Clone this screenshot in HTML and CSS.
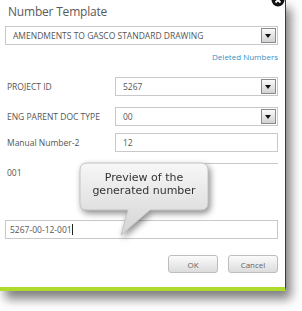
FILE: index.html
```html
<!DOCTYPE html>
<html lang="en">
<head>
  <meta charset="UTF-8" />
  <title>Number Template</title>
  <link rel="stylesheet" href="styles.css">
</head>
<body>

  <div class="stage">
    <div class="dialog">
      <span class="close">
        <svg width="14" height="14" viewBox="0 0 14 14">
          <circle cx="7" cy="7" r="6.5" fill="#111"/>
          <path d="M4.5 4.5 L9.5 9.5 M9.5 4.5 L4.5 9.5" stroke="#fff" stroke-width="1.8"/>
        </svg>
      </span>
      <h1 class="title">Number Template</h1>

      <div class="field select wide">
        <span class="value">AMENDMENTS TO GASCO STANDARD DRAWING</span>
        <span class="drop"></span>
      </div>

      <div class="links"><a class="link">Deleted Numbers</a></div>

      <div class="row first">
        <label>PROJECT ID</label>
        <div class="field select">
          <span class="value">5267</span>
          <span class="drop"></span>
        </div>
      </div>

      <div class="row r2">
        <label>ENG PARENT DOC TYPE</label>
        <div class="field select">
          <span class="value">00</span>
          <span class="drop"></span>
        </div>
      </div>

      <div class="row r3">
        <label>Manual Number-2</label>
        <div class="field input"><span class="value">12</span></div>
      </div>

      <div class="row r4">
        <label>001</label>
        <div class="field line"></div>
      </div>

      <div class="field input preview"><span class="value">5267-00-12-001</span><span class="caret"></span></div>

      <div class="actions">
        <button>OK</button>
        <button>Cancel</button>
      </div>

      <div class="callout">
        <svg width="140" height="82" viewBox="0 0 140 82">
          <defs>
            <linearGradient id="cg" x1="0" y1="0" x2="0" y2="1">
              <stop offset="0" stop-color="#f7f7f7"/>
              <stop offset="1" stop-color="#d4d4d4"/>
            </linearGradient>
          </defs>
          <path d="M8 1 H122 Q129 1 129 8 V41 Q129 48 122 48 H71 L42 73 L49 48 H8 Q1 48 1 41 V8 Q1 1 8 1 Z"
                fill="url(#cg)" stroke="#c4c4c4" stroke-width="1"/>
        </svg>
        <p>Preview of the<br>generated number</p>
      </div>
    </div>
  </div>

</body>
</html>
```

FILE: styles.css
```css
body {
  margin: 0;
  background: #ffffff;
  font-family: 'Open Sans', sans-serif;
}

.stage {
  position: relative;
  width: 302px;
  height: 311px;
  overflow: hidden;
  background: #ffffff;
}

.dialog {
  position: relative;
  box-sizing: border-box;
  width: 286px;
  padding: 3px 7px 14px 5px;
  background: #ffffff;
  border-right: 1px solid #3a3a3a;
  border-bottom: 4px solid #aedb2c;
  box-shadow: 5px 8px 10px rgba(0,0,0,0.5);
}

.close {
  position: absolute;
  top: -7px;
  right: 0;
  width: 14px;
  height: 14px;
}

.close svg {
  display: block;
}

.title {
  margin: 0;
  height: 18px;
  padding-left: 3px;
  font-size: 12px;
  font-weight: normal;
  letter-spacing: -0.2px;
  line-height: 18px;
  color: #5a5a5a;
}

.field {
  box-sizing: border-box;
  position: relative;
  height: 19px;
  border: 1px solid #c9c9c9;
  font-size: 8.5px;
  line-height: 17px;
  color: #555;
}

.field .value {
  padding-left: 7px;
}

.wide {
  margin-top: 5px;
}

.drop {
  position: absolute;
  top: 1px;
  right: 1px;
  width: 13px;
  height: 13px;
  border: 1px solid #8a8a8a;
  background: linear-gradient(#fafafa, #d2d2d2);
}

.drop::after {
  content: "";
  position: absolute;
  left: 3px;
  top: 5px;
  border-left: 3.5px solid transparent;
  border-right: 3.5px solid transparent;
  border-top: 4px solid #111;
}

.links {
  margin-top: 5px;
  height: 13px;
  text-align: right;
  font-size: 8px;
  line-height: 13px;
}

.link {
  color: #3b8fc6;
}

.row {
  display: grid;
  grid-template-columns: 110px 1fr;
  align-items: center;
}

.row label {
  padding-left: 2px;
  font-size: 8.5px;
  color: #555;
}

.first { margin-top: 14px; }
.r2 { margin-top: 11px; }
.r3 { margin-top: 7px; }
.r4 { margin-top: 11px; }

.field.line {
  border: none;
  border-top: 1px solid #c9c9c9;
}

.preview {
  margin-top: 38px;
  display: flex;
  align-items: center;
}

.preview .value {
  padding-left: 4px;
}

.caret {
  width: 1px;
  height: 11px;
  background: #222;
}

.actions {
  margin-top: 16px;
  display: flex;
  justify-content: flex-end;
  gap: 10px;
}

.actions button {
  width: 50px;
  height: 18px;
  padding: 0;
  border: 1px solid #bdbdbd;
  border-radius: 3px;
  background: linear-gradient(#fbfbfb, #dcdcdc);
  font-family: 'Open Sans', sans-serif;
  font-size: 8px;
  color: #666;
}

.callout {
  position: absolute;
  left: 79px;
  top: 162px;
  width: 140px;
  height: 82px;
  filter: drop-shadow(2px 3px 3px rgba(0,0,0,0.45));
}

.callout svg {
  position: absolute;
  left: 0;
  top: 0;
}

.callout p {
  position: relative;
  margin: 0;
  width: 130px;
  padding-top: 9px;
  text-align: center;
  font-family: 'DejaVu Sans', sans-serif;
  font-size: 11px;
  line-height: 13px;
  color: #333;
}
```
